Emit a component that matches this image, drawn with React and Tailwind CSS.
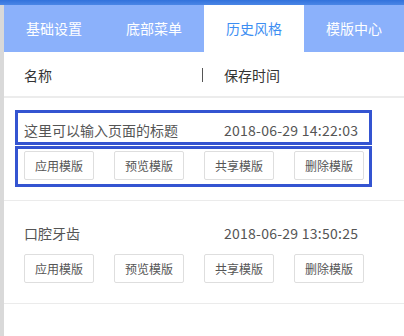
import React from "react";

const font = { fontFamily: '"Noto Sans CJK SC", "Noto Sans", sans-serif' };

const tabs = ["基础设置", "底部菜单", "历史风格", "模版中心"];
const actions = ["应用模版", "预览模版", "共享模版", "删除模版"];

function Row({ title, time, annotated }) {
  return (
    <div className="relative border-b border-[#ebebeb] pt-[22px] pb-[20px]">
      <div className="flex h-[20px] items-center text-[14px] leading-[20px] text-[#555]">
        <div className="w-[200px] pl-[20px]">{title}</div>
        <div className="pl-[20px] tracking-[0.25px]">{time}</div>
      </div>
      <div className="mt-[11px] flex gap-[20px] pl-[20px]">
        {actions.map((a) => (
          <div
            key={a}
            className="flex h-[29px] w-[70px] items-center justify-center rounded-[2px] border border-[#dedede] text-[12px] text-[#555]"
          >
            {a}
          </div>
        ))}
      </div>
      {annotated && (
        <>
          <div className="pointer-events-none absolute left-[11px] top-[12px] h-[35px] w-[357px] border-[3px] border-[#3454d1]" />
          <div className="pointer-events-none absolute left-[11px] top-[48px] h-[41px] w-[357px] border-[3px] border-[#3454d1]" />
        </>
      )}
    </div>
  );
}

export default function App() {
  return (
    <div className="flex h-[336px] w-[404px] flex-col overflow-hidden bg-white" style={font}>
      <div className="h-[5px] w-full bg-gradient-to-b from-[#3272dc] to-[#4a86e6]" />
      <div className="flex flex-1">
        <div className="w-[4px] bg-[#d9d9d9]" />
        <div className="flex flex-1 flex-col">
          <div className="flex h-[47px] bg-[#8bb1fb]">
            {tabs.map((t, i) => (
              <div
                key={t}
                className={
                  i === 2
                    ? "flex w-[100px] items-center justify-center bg-white text-[14px] text-[#3d8ef2]"
                    : "flex w-[100px] items-center justify-center text-[14px] text-white"
                }
              >
                {t}
              </div>
            ))}
          </div>
          <div className="flex h-[46px] items-center border-b-2 border-[#ececec] pt-[2px] text-[14px] text-[#333]">
            <div className="flex w-[200px] items-center justify-between pl-[20px]">
              <span>名称</span>
              <span className="mr-[1px] h-[14px] w-px bg-[#555]" />
            </div>
            <div className="pl-[20px]">保存时间</div>
          </div>
          <Row title="这里可以输入页面的标题" time="2018-06-29 14:22:03" annotated />
          <Row title="口腔牙齿" time="2018-06-29 13:50:25" />
        </div>
      </div>
    </div>
  );
}
